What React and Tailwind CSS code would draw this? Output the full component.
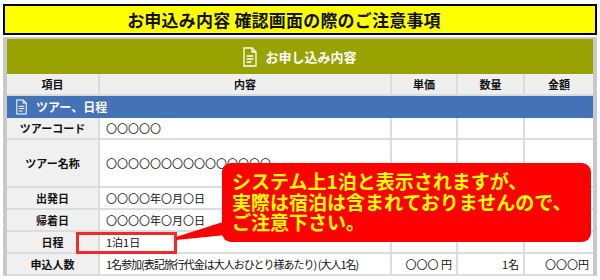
import React from 'react';

const font = { fontFamily: '"Noto Sans CJK JP", "Noto Sans", sans-serif' };

// Document outline icon used in the headers
const DocIcon = ({ className }) => (
  <svg viewBox="0 0 14 20" className={className} fill="none" stroke="currentColor" strokeWidth="1.3">
    <path d="M1 1h8l4 4v14H1z" />
    <path d="M9 1v4h4" />
    <path d="M3.5 9h7M3.5 12h7M3.5 15h5" />
  </svg>
);

const rows = [
  { label: 'ツアーコード', value: '〇〇〇〇〇', h: 'h-[22px]' },
  { label: 'ツアー名称', value: '〇〇〇〇〇〇〇〇〇〇〇〇〇〇〇', h: 'h-[48px]' },
  { label: '出発日', value: '〇〇〇〇年〇月〇日', h: 'h-[22px]' },
  { label: '帰着日', value: '〇〇〇〇年〇月〇日', h: 'h-[22px]' },
  { label: '日程', value: '1泊1日', h: 'h-[22px]' },
];

const cell = 'border-b-2 border-r-2 border-[#dcdcdc]';

export default function App() {
  return (
    <div className="relative w-[600px] h-[280px] overflow-hidden bg-white text-[#111]" style={font}>
      {/* Title banner */}
      <div className="mx-[3px] mt-[4px] h-[31px] border-2 border-black bg-[#ffff00] flex items-center justify-center pr-[32px]">
        <span className="text-[17px] font-bold leading-none tracking-[0.2px]">お申込み内容 確認画面の際のご注意事項</span>
      </div>

      {/* Frame */}
      <div className="mx-[3px] mt-[2px] border-x-4 border-t-2 border-[#c8c8c8]">
        <div className="h-[35px] bg-[#98a200] flex items-center justify-center gap-[8px] text-white">
          <DocIcon className="w-[14px] h-[20px]" />
          <span className="text-[13px] font-bold">お申し込み内容</span>
        </div>

        <div className="grid grid-cols-[93px_292px_66px_67px_68px] text-[11px]">
          {/* column headings */}
          {['項目', '内容', '単価', '数量', '金額'].map((t, i) => (
            <div key={t} className={`h-[22px] bg-[#efefef] flex items-center justify-center font-bold ${i === 4 ? 'border-b-2 border-[#dcdcdc]' : cell}`}>
              {t}
            </div>
          ))}

          {/* section bar */}
          <div className="col-span-5 h-[22px] bg-[#4372b6] flex items-center gap-[9px] pl-[9px] text-white">
            <DocIcon className="w-[11px] h-[16px]" />
            <span className="text-[12px] font-bold">ツアー、日程</span>
          </div>

          {rows.map((r) => (
            <React.Fragment key={r.label}>
              <div className={`${r.h} ${cell} bg-[#f0f0f0] flex items-center justify-center font-bold`}>{r.label}</div>
              <div className={`${r.h} ${cell} bg-white flex items-center pl-[6px] whitespace-nowrap`}>{r.value}</div>
              <div className={`${r.h} ${cell} bg-white`} />
              <div className={`${r.h} ${cell} bg-white`} />
              <div className={`${r.h} border-b-2 border-[#dcdcdc] bg-white`} />
            </React.Fragment>
          ))}

          <div className={`h-[22px] ${cell} bg-[#f0f0f0] flex items-center justify-center font-bold`}>申込人数</div>
          <div className={`h-[22px] ${cell} bg-white flex items-center pl-[6px] whitespace-nowrap tracking-[-1px]`}>
            1名参加(表記旅行代金は大人おひとり様あたり) (大人1名)
          </div>
          <div className={`h-[22px] ${cell} bg-white flex items-center justify-end pr-[4px]`}>〇〇〇 円</div>
          <div className={`h-[22px] ${cell} bg-white flex items-center justify-end pr-[4px]`}>1名</div>
          <div className="h-[22px] border-b-2 border-[#dcdcdc] bg-white flex items-center justify-end pr-[4px]">〇〇〇円</div>
        </div>
      </div>

      {/* highlight around 日程 value */}
      <div className="absolute left-[76px] top-[232px] w-[101px] h-[22px] border-[3px] border-[#ee2a2a]" />

      {/* pointer */}
      <svg className="absolute left-[170px] top-[215px]" width="60" height="30" viewBox="0 0 60 30">
        <polygon points="6,22 56,6 56,20 6,25" fill="#ff0000" />
      </svg>

      {/* callout */}
      <div className="absolute left-[222px] top-[163px] w-[369px] h-[79px] rounded-[9px] bg-[#ff0000] pl-[10px] pt-[8px] text-[#ffff00] font-bold text-[19px] leading-[20.5px]">
        <div>システム上1泊と表示されますが、</div>
        <div>実際は宿泊は含まれておりませんので、</div>
        <div>ご注意下さい。</div>
      </div>
    </div>
  );
}
